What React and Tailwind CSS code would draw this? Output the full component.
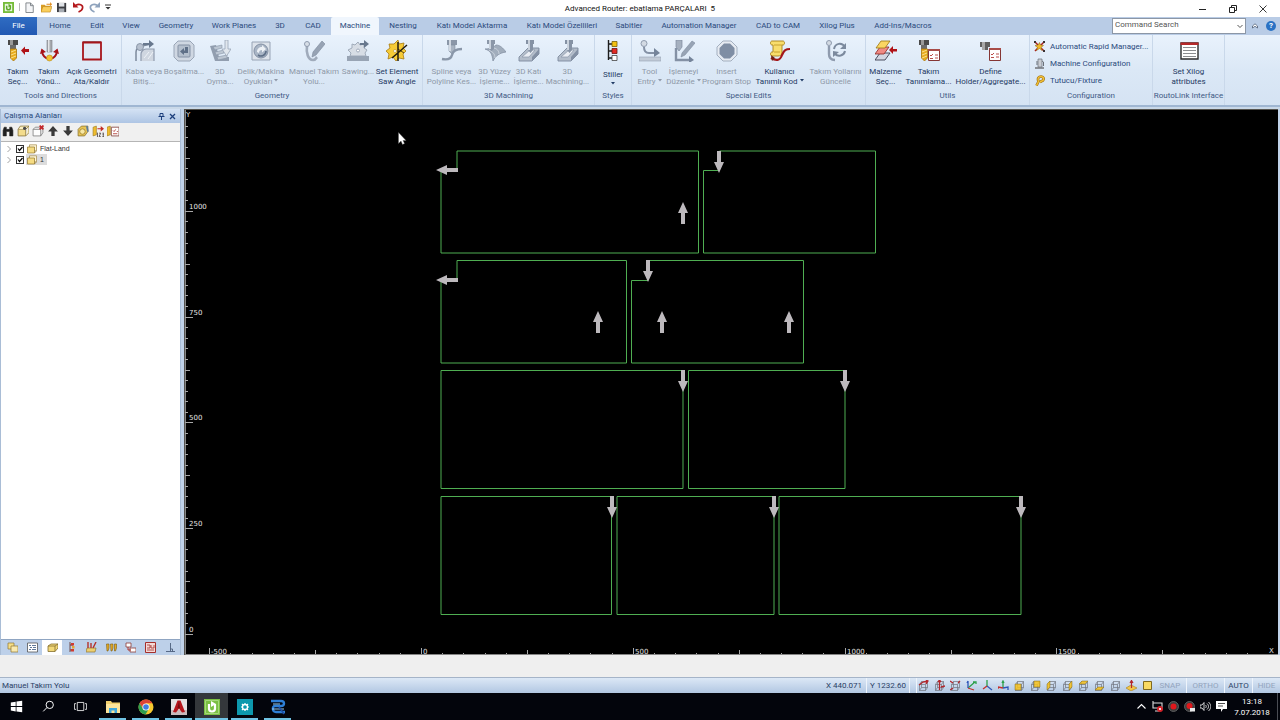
import clsx from "clsx";

const TABS = [
  { label: "Home", w: "w-[42px]" },
  { label: "Edit", w: "w-[32px]" },
  { label: "View", w: "w-[36px]" },
  { label: "Geometry", w: "w-[54px]" },
  { label: "Work Planes", w: "w-[62px]" },
  { label: "3D", w: "w-[30px]" },
  { label: "CAD", w: "w-[36px]" },
  { label: "Machine", w: "w-[48px]", active: true },
  { label: "Nesting", w: "w-[48px]" },
  { label: "Katı Model Aktarma", w: "w-[90px]" },
  { label: "Katı Model Özellileri", w: "w-[90px]" },
  { label: "Sabitler", w: "w-[44px]" },
  { label: "Automation Manager", w: "w-[96px]" },
  { label: "CAD to CAM", w: "w-[62px]" },
  { label: "Xilog Plus", w: "w-[56px]" },
  { label: "Add-Ins/Macros", w: "w-[76px]" },
];

function Icon({ children, box = 22, className = "size-[22px]" }) {
  return (
    <svg viewBox={`0 0 ${box} ${box}`} className={clsx("block shrink-0", className)} fill="none" aria-hidden="true">
      {children}
    </svg>
  );
}

function Drill() {
  return (
    <>
      <path d="M1 0h10v5H1z" fill="#4a4a4a" />
      <path d="M3 0h3v5H3z" fill="#9a9a9a" />
      <path d="M3 5h6v4H3z" fill="#6b6b6b" />
      <path d="M3.500 9h6v9l-3 3-3-3z" fill="#e8ab1c" stroke="#a8750a" strokeWidth=".8" />
      <path d="M4 12l5-2M4 15l5-2M4 18l5-2" stroke="#fbe08a" strokeWidth="1" />
    </>
  );
}

/* ---------- ribbon icons ---------- */

const ICONS = {
  toolSelect: (
    <Icon>
      <Drill />
      <path d="M14 10.500l4-4v2.500h4v3h-4v3z" fill="#b01217" />
    </Icon>
  ),
  toolDir: (
    <Icon>
      <path d="M9 0h5v12H9z" fill="#a5a9ae" stroke="#7e8287" strokeWidth=".6" />
      <path d="M10 0h1.500v12H10z" fill="#e4e6e8" />
      <path d="M4 12c1 4 3 6 6 6.500M19 12c-1 4-3 6-6 6.500" stroke="#a81318" strokeWidth="2" />
      <path d="M2 14l1.500-5.500L8 12zM21 14l-1.500-5.500L15 12z" fill="#a81318" />
      <circle cx="11.500" cy="18" r="3" fill="#f2c231" stroke="#b98a14" strokeWidth=".6" />
    </Icon>
  ),
  openGeo: (
    <Icon>
      <path d="M2 2.500h18v17H2z" fill="#e0eaf6" stroke="#a8161b" strokeWidth="1.800" />
      <path d="M2 1.600h18" stroke="#7f1216" strokeWidth=".6" />
    </Icon>
  ),
  rough: (
    <Icon>
      <path d="M3 21V12c0-3 2-5 6-6l9-2" stroke="#7c899c" strokeWidth="1.500" />
      <path d="M8 21v-7c0-2 2-5 5-5h8v12" fill="#cfd6e0" stroke="#8f9bae" strokeWidth="1.200" />
      <circle cx="7" cy="7" r="3.500" fill="#b7c1cf" stroke="#7c899c" strokeWidth=".8" />
      <path d="M10 3h6V0l5 4-5 4V5h-6z" fill="#68788e" />
      <path d="M11 18l5-6M15 19l5-7" stroke="#eef2f7" />
    </Icon>
  ),
  pocket: (
    <Icon>
      <path d="M5 1h12l4 4v12l-4 4H5l-4-4V5z" fill="#cfd7e2" stroke="#9aa6b7" />
      <rect x="5" y="5" width="12" height="12" rx="1" fill="#b4bfcd" stroke="#8491a5" />
      <path d="M12 7h3v6h-4v2l-4-3.500L11 8v2.500h1z" fill="#5f7088" />
    </Icon>
  ),
  engrave: (
    <Icon>
      <path d="M1 6l6-1 3 12h10v4H6z" fill="#929eaf" />
      <path d="M4 7l9-2v3l-7 2zM6 12l9-2v3l-8 2zM8 17l10-2v3l-9 2z" fill="#bcc6d2" stroke="#8794a6" strokeWidth=".6" />
      <path d="M16 0h3v9h3l-4.500 7L13 9h3z" fill="#e0e6ed" stroke="#9aa6b7" strokeWidth=".8" />
    </Icon>
  ),
  holes: (
    <Icon>
      <path d="M2 2h18v18H2z" fill="#dde3eb" stroke="#98a4b5" />
      <circle cx="11" cy="11" r="7" fill="#a9b5c5" stroke="#8491a5" />
      <path d="M7 12c0-3 2-5 5-5V5l4 4-4 3.500V10c-2 0-3 1-3 3z" fill="#edf1f6" />
      <path d="M16 11a5 5 0 0 1-8 4" stroke="#5e6f87" strokeWidth="1.600" />
    </Icon>
  ),
  manual: (
    <Icon>
      <path d="M4 5c-1 8 1 15 6 15 3 0 3-2 4-3" stroke="#a0abbb" strokeWidth="2.600" />
      <circle cx="4" cy="4" r="2.500" fill="#d7dee7" stroke="#8f9bae" />
      <path d="M19 1l3 3-9 11-4 2 1-5z" fill="#97a3b4" stroke="#7c899c" strokeWidth=".6" />
    </Icon>
  ),
  sawing: (
    <Icon>
      <path d="M5 4l3 1 3-3 2 3 4-1v4l3 2-2 3 1 3H3l1-3-3-3 4-2z" fill="#d7dde5" stroke="#a0abba" />
      <circle cx="11" cy="10.500" r="1.500" fill="#fff" stroke="#8f9bae" strokeWidth=".8" />
      <path d="M0 16h22v5H0z" fill="#98a4b4" />
      <path d="M13 3h4V0l5 4-5 4V5h-4z" fill="#68788e" />
    </Icon>
  ),
  sawAngle: (
    <Icon>
      <path d="M3 4h5l4-4 1 4 5-1-1 5 3 3-3 3 1 5-5-1-3 3-3-4-5 2 1-5-3-3 4-3z" fill="#f6cb36" stroke="#a97b12" strokeWidth=".8" />
      <path d="M12 2v19M21 5L6 18" stroke="#231c0c" strokeWidth="1.500" />
      <path d="M12 9l6 4" stroke="#231c0c" strokeWidth=".8" />
      <circle cx="9" cy="11" r="1.500" fill="#fff" stroke="#a97b12" strokeWidth=".5" />
    </Icon>
  ),
  spline: (
    <Icon>
      <path d="M6 0h10v5H6z" fill="#8b97a8" />
      <path d="M8 5h6v6l-3 3-3-3z" fill="#a9b4c2" stroke="#7c899c" strokeWidth=".6" />
      <path d="M8 0h2v11H8z" fill="#d2d9e2" />
      <path d="M1 19c5 1 9 0 10-4 1-5 5-6 10-6" stroke="#8a97a9" strokeWidth="2.400" />
    </Icon>
  ),
  surface: (
    <Icon>
      <path d="M1 9c6 2 7 5 8 12 3-6 7-8 13-9C19 8 16 5 12 5 9 8 5 9 1 9z" fill="#a1adbc" stroke="#7e8b9e" strokeWidth=".7" />
      <path d="M5 10c4 2 6 4 6 8M10 8c4 1 5 4 5 6" stroke="#ced6e0" />
      <path d="M3 0h8v4H3zM5 4h5v5l-2.500 2L5 9z" fill="#8b97a8" />
      <path d="M5 0h2v9H5z" fill="#ccd4de" />
    </Icon>
  ),
  solid: (
    <Icon>
      <path d="M1 17L10 8h11v6l-7 7H1z" fill="#b3bdca" stroke="#7e8b9e" strokeWidth=".9" />
      <path d="M4 17l8-7h5l-6 7z" fill="#e9edf3" stroke="#8a97a9" strokeWidth=".7" />
      <path d="M14 21v-4l7-8v5z" fill="#8491a5" />
      <path d="M8 0h8v4H8zM10 4h5v6l-2.500 3L10 10z" fill="#8592a4" />
      <path d="M10 0h2v10h-2z" fill="#ccd4de" />
    </Icon>
  ),
  styles: (
    <Icon>
      <path d="M6.500 0v20M6 4h5M6 11h5M6 18h5" stroke="#1d1d1d" strokeWidth="1.400" />
      <path d="M10 1.500h5v5h-5z" fill="#f3c113" stroke="#7a6009" strokeWidth=".8" />
      <path d="M10 8.500h5v5h-5z" fill="#e32a24" stroke="#6f1310" strokeWidth=".8" />
      <path d="M10 15.500h5v5h-5z" fill="#fff" stroke="#444" strokeWidth=".8" />
    </Icon>
  ),
  toolEntry: (
    <Icon>
      <circle cx="5" cy="3.500" r="3" fill="#d3dae3" stroke="#8f9bae" />
      <path d="M5 7c0 4 1 6 5 6h6" stroke="#8491a5" strokeWidth="2" />
      <path d="M15 8l6 5-6 4z" fill="#75849a" />
      <path d="M0 17h22v4H0z" fill="#c2cbd7" stroke="#96a2b3" strokeWidth=".6" />
    </Icon>
  ),
  editOp: (
    <Icon>
      <path d="M3 0h6v7l-3 4-3-4z" fill="#a5b0bf" stroke="#7e8b9e" strokeWidth=".7" />
      <path d="M3 8v12h14" stroke="#8491a5" strokeWidth="2.400" />
      <path d="M16 16l5 4-5 3z" fill="#75849a" />
      <path d="M19 1l3 2-10 12-4 2 1-4z" fill="#98a4b5" stroke="#7e8b9e" strokeWidth=".6" />
    </Icon>
  ),
  stop: (
    <Icon>
      <path d="M7 1h8l6 6v8l-6 6H7l-6-6V7z" fill="#e6ebf2" stroke="#a3afbf" />
      <path d="M8 3.500h6L18.500 8v6L14 18.500H8L3.500 14V8z" fill="#7f8ea4" />
    </Icon>
  ),
  userCode: (
    <Icon>
      <path d="M3 1h11c2 0 2 4 0 4h-1v8c0 2-2 3-4 3H3c-2 0-2-4 0-4h1V5H3C1 5 1 1 3 1z" fill="#f8dd6c" stroke="#a8821a" strokeWidth=".9" />
      <path d="M5 5h8M5 12h6" stroke="#c8a02c" />
      <path d="M2 18c5 3 9 3 11-3 2-5 4-6 8-6" stroke="#a3171a" strokeWidth="2.200" />
      <path d="M2 15l1 6 3-3z" fill="#6d2016" />
    </Icon>
  ),
  update: (
    <Icon>
      <circle cx="4" cy="3" r="2.500" fill="#d3dae3" stroke="#8f9bae" />
      <path d="M4 6v8c0 3 1 6 6 6" stroke="#8f9bae" strokeWidth="2.400" />
      <path d="M9 9c1-6 8-7 11-2M20 11c-1 5-7 6-10 3" stroke="#7c8a9e" strokeWidth="2" />
      <path d="M21 3v6h-6zM8 17v-6l6 1z" fill="#7c8a9e" />
    </Icon>
  ),
  material: (
    <Icon>
      <path d="M0 20l5-7h10l-5 7z" fill="#d3d6e2" stroke="#3d4050" strokeWidth=".9" />
      <path d="M0 14l5-7h9l-5 7z" fill="#f08a84" stroke="#8c2722" strokeWidth=".8" />
      <path d="M1 8l5-7h9l-5 7z" fill="#fad662" stroke="#9b7611" strokeWidth=".8" />
      <path d="M14 10l4-4v3h4v2.500h-4V14z" fill="#b01217" />
    </Icon>
  ),
  defineTool: (
    <Icon>
      <Drill />
      <path d="M10.500 9.500h11v11h-11z" fill="#fff" stroke="#853634" />
      <path d="M10 9h12v2H10z" fill="#a84c48" />
      <path d="M12 15l1 1 2-2M12 18.500h3M17 15h3M17 18h3" stroke="#b23a36" strokeWidth=".9" />
    </Icon>
  ),
  holder: (
    <Icon>
      <path d="M0 2h10v5H0zM2 7h6v3H2z" fill="#606060" />
      <path d="M2 2h3v8H2z" fill="#a8a8a8" />
      <path d="M9.500 8.500h11v12h-11z" fill="#fff" stroke="#853634" />
      <path d="M9 8h12v2H9z" fill="#a84c48" />
      <path d="M11 14l1 1 2-2M11 17.500h3M16 14h3M16 17h3" stroke="#b23a36" strokeWidth=".9" />
    </Icon>
  ),
  xilog: (
    <Icon>
      <path d="M3 3h17v16H3z" fill="#fff" stroke="#2b2b2b" strokeWidth="1.400" />
      <path d="M2.500 2.500h18v2.500h-18z" fill="#b5282a" />
      <path d="M5 7.500h13M5 10.500h13M5 13.500h13M5 16.500h13" stroke="#8b8d90" />
    </Icon>
  ),
};

const GROUPS = [
  {
    title: "Tools and Directions",
    w: "w-[122px]",
    items: [
      { icon: "toolSelect", lines: ["Takım", "Seç..."], w: "w-[32px]" },
      { icon: "toolDir", lines: ["Takım", "Yönü..."], w: "w-[30px]" },
      { icon: "openGeo", lines: ["Açık Geometri", "Ata/Kaldır"], w: "w-[56px]" },
    ],
  },
  {
    title: "Geometry",
    w: "w-[301px]",
    items: [
      { icon: "rough", lines: ["Kaba veya", "Bitiş..."], w: "w-[40px]", off: true },
      { icon: "pocket", lines: ["Boşaltma..."], w: "w-[40px]", off: true },
      { icon: "engrave", lines: ["3D", "Oyma..."], w: "w-[32px]", off: true },
      { icon: "holes", lines: ["Delik/Makina", "Oyukları"], w: "w-[50px]", off: true, menu: true },
      { icon: "manual", lines: ["Manuel Takım", "Yolu..."], w: "w-[56px]", off: true },
      { icon: "sawing", lines: ["Sawing..."], w: "w-[32px]", off: true },
      { icon: "sawAngle", lines: ["Set Element", "Saw Angle"], w: "w-[46px]" },
    ],
  },
  {
    title: "3D Machining",
    w: "w-[172px]",
    items: [
      { icon: "spline", lines: ["Spline veya", "Polyline Kes..."], w: "w-[50px]", off: true },
      { icon: "surface", lines: ["3D Yüzey", "İşleme..."], w: "w-[36px]", off: true },
      { icon: "solid", lines: ["3D Katı", "İşleme..."], w: "w-[32px]", off: true },
      { icon: "solid", lines: ["3D", "Machining..."], w: "w-[46px]", off: true },
    ],
  },
  {
    title: "Styles",
    w: "w-[37px]",
    items: [{ icon: "styles", lines: ["Stiller"], w: "w-[36px]", stacked: true }],
  },
  {
    title: "Special Edits",
    w: "w-[234px]",
    items: [
      { icon: "toolEntry", lines: ["Tool", "Entry"], w: "w-[32px]", off: true, menu: true },
      { icon: "editOp", lines: ["İşlemeyi", "Düzenle"], w: "w-[36px]", off: true, menu: true },
      { icon: "stop", lines: ["Insert", "Program Stop"], w: "w-[50px]", off: true },
      { icon: "userCode", lines: ["Kullanıcı", "Tanımlı Kod"], w: "w-[56px]", menu: true },
      { icon: "update", lines: ["Takım Yollarını", "Güncelle"], w: "w-[56px]", off: true },
    ],
  },
  {
    title: "Utils",
    w: "w-[164px]",
    items: [
      { icon: "material", lines: ["Malzeme", "Seç..."], w: "w-[36px]" },
      { icon: "defineTool", lines: ["Takım", "Tanımlama..."], w: "w-[50px]" },
      { icon: "holder", lines: ["Define", "Holder/Aggregate..."], w: "w-[74px]" },
    ],
  },
];

function Caret({ className }) {
  return (
    <svg viewBox="0 0 4 3" className={clsx("inline-block h-[3px] w-[4px]", className)} aria-hidden="true">
      <path d="M0 0h4L2 2.500z" fill="currentColor" />
    </svg>
  );
}

function RibbonButton({ icon, lines, w, off, menu, stacked }) {
  return (
    <button
      type="button"
      disabled={off}
      className={clsx(
        "flex shrink-0 flex-col items-center whitespace-nowrap text-center leading-[10px]",
        w,
        off ? "text-[#8f99a8]" : "text-[#1f3a63]"
      )}
    >
      {ICONS[icon]}
      <span className={clsx("flex flex-col items-center", stacked ? "mt-2" : "mt-[5px]")}>
        {lines.map((line, i) => (
          <span key={i}>
            {line}
            {menu && i === lines.length - 1 && <Caret className="mb-[2px] ml-[2px]" />}
          </span>
        ))}
        {stacked && <Caret className="mt-[2px]" />}
      </span>
    </button>
  );
}

function Group({ title, w, children }) {
  return (
    <section className={clsx("flex shrink-0 flex-col border-r border-[#c9d8ea] pt-[5px]", w)} aria-label={title}>
      <div className="flex flex-1 justify-center">{children}</div>
      <div className="whitespace-nowrap pb-1 text-center leading-[10px] text-[#3f5a85]">{title}</div>
    </section>
  );
}

/* ---------- title bar, tabs and ribbon ---------- */

function RouterLogo({ className }) {
  return (
    <Icon box={12} className={className}>
      <path d="M0 0h12v12H0z" fill="#76bd3a" />
      <path d="M2 2h8v8H2z" fill="#e9f5df" />
      <path d="M4 4v2.500a2 2 0 0 0 4 0V4" stroke="#5fa82a" strokeWidth="1.600" />
      <path d="M6 2l3 2-3 2z" fill="#5fa82a" />
    </Icon>
  );
}

function QuickAccess() {
  const cls = "size-[11px]";
  return (
    <div className="flex items-center gap-[5px] pl-[3px] pb-[3px]">
      <RouterLogo className={cls} />
      <span className="h-2 w-px bg-[#b9b9b9]" />
      <button type="button" aria-label="New">
        <Icon box={12} className={cls}>
          <path d="M1 1h5l3 3v7.500H1z" fill="#f4f5f7" stroke="#6f747b" strokeWidth=".9" />
          <path d="M6 1v3h3" stroke="#6f747b" strokeWidth=".9" />
        </Icon>
      </button>
      <button type="button" aria-label="Open">
        <Icon box={12} className={cls}>
          <path d="M0 11V3h4l1 1h5v7z" fill="#d89d25" />
          <path d="M0 11l2-6h10l-2 6z" fill="#f9ce5c" stroke="#b97f14" strokeWidth=".6" />
          <path d="M6 2h4V0l2 2.500L10 5V3H6z" fill="#e08a1c" />
        </Icon>
      </button>
      <button type="button" aria-label="Save">
        <Icon box={12} className={cls}>
          <path d="M0 1h10v10H0z" fill="#3b3d42" />
          <path d="M2 1h6v4H2z" fill="#dfe2e6" />
          <path d="M2 7h6v4H2z" fill="#a8adb4" />
        </Icon>
      </button>
      <button type="button" aria-label="Undo">
        <Icon box={12} className={cls}>
          <path d="M3 3.500c4-2 8-.5 7.500 3-.3 2-2 3.500-4.500 4.500" stroke="#b3181c" strokeWidth="1.800" />
          <path d="M0 0v6h6z" fill="#b3181c" />
        </Icon>
      </button>
      <button type="button" aria-label="Redo">
        <Icon box={12} className={cls}>
          <path d="M9 3.500c-4-2-8-.5-7.500 3 .3 2 2 3.500 4.500 4.500" stroke="#8fa3bd" strokeWidth="1.800" />
          <path d="M12 0v6H6z" fill="#8fa3bd" />
        </Icon>
      </button>
      <button type="button" aria-label="Customize toolbar">
        <Icon box={6} className="size-[6px]">
          <path d="M0 1h6" stroke="#333" />
          <path d="M.5 3h5L3 5.500z" fill="#333" />
        </Icon>
      </button>
    </div>
  );
}

function TitleBar() {
  return (
    <header className="grid h-[17px] shrink-0 grid-cols-3 items-center bg-white">
      <QuickAccess />
      <h1 className="whitespace-pre text-center text-[#111]">Advanced Router: ebatlama PARÇALARI  5</h1>
      <div className="flex justify-end gap-[22px] pr-[13px] text-[#222]">
        <button type="button" aria-label="Minimize">
          <Icon box={8} className="size-2"><path d="M0 4.500h7" stroke="currentColor" /></Icon>
        </button>
        <button type="button" aria-label="Restore">
          <Icon box={8} className="size-2">
            <path d="M.5 2.500h5v5h-5zM2.500 2.500v-2h5v5h-2" stroke="currentColor" />
          </Icon>
        </button>
        <button type="button" aria-label="Close">
          <Icon box={8} className="size-2"><path d="M.5.5l7 7M7.500.5l-7 7" stroke="currentColor" strokeWidth=".9" /></Icon>
        </button>
      </div>
    </header>
  );
}

function TabBar() {
  return (
    <nav className="flex h-[18px] shrink-0 bg-[#b9cce6] text-[#2b4a7c]">
      <button type="button" className="mr-[2px] w-[37px] bg-linear-to-b from-[#2f6cc2] to-[#2259b3] text-white">File</button>
      {TABS.map((t) => (
        <button
          key={t.label}
          type="button"
          className={clsx(
            "shrink-0 whitespace-nowrap",
            t.w,
            t.active && "rounded-t-[2px] bg-[#f0f6fd]"
          )}
        >
          {t.label}
        </button>
      ))}
      <div className="ml-auto flex items-center gap-[6px] pr-[4px]">
        <div className="relative">
          <input
            type="text"
            aria-label="Command Search"
            placeholder="Command Search"
            className="block h-[16px] w-[134px] border border-[#8c97a6] bg-white pl-[2px] pb-[4px] text-[#444] outline-none placeholder:text-[#555]"
          />
          <Icon box={6} className="absolute right-[3px] top-[5px] size-[6px]">
            <path d="M.5 2L3 4.500 5.500 2" stroke="#444" strokeWidth=".9" />
          </Icon>
        </div>
        <button type="button" aria-label="Collapse ribbon">
          <Icon box={6} className="size-[6px]">
            <path d="M.5 3L3 .8 5.500 3v2L3 3.300.5 5z" fill="#fff" stroke="#3d4d66" strokeWidth=".7" />
          </Icon>
        </button>
        <button type="button" aria-label="Help" className="ml-[2px] flex size-[10px] items-center justify-center rounded-full bg-[#2a72c4] font-bold leading-none text-white">
          ?
        </button>
      </div>
    </nav>
  );
}

function Ribbon() {
  const row = "flex items-center gap-[5px] leading-[10px] whitespace-nowrap";
  return (
    <div className="flex h-[70px] shrink-0 overflow-hidden bg-linear-to-b from-[#e9f2fc] via-[#dbe8f6] to-[#d5e3f3]">
      {GROUPS.map((g) => (
        <Group key={g.title} title={g.title} w={g.w}>
          {g.items.map((it, i) => <RibbonButton key={i} {...it} />)}
        </Group>
      ))}
      <Group title="Configuration" w="w-[123px]">
        <div className="flex flex-1 flex-col gap-[6px] pl-[4px] pt-[1px] text-[#2b4a7c]">
          <button type="button" className={row}>
            <Icon box={11} className="size-[11px]">
              <path d="M1 1l4 4M10 1L6 5M1 10l4-4M10 10L7 7" stroke="#a82020" strokeWidth="1.500" />
              <path d="M5.500 1.500l1 2.500 3 .5-2.500 2 1 3-2.500-2-3 2 1-3-2.500-2 3-.5z" fill="#f0b928" stroke="#8a6510" strokeWidth=".5" />
              <path d="M0 0h2v2H0zM9 0h2v2H9zM9 9h2v2H9z" fill="#3a3030" />
            </Icon>
            Automatic Rapid Manager...
          </button>
          <button type="button" className={row}>
            <Icon box={11} className="size-[11px]">
              <path d="M1 9h9v2H1z" fill="#8b9097" />
              <path d="M4 1h4v8H4z" fill="#c9cdd3" stroke="#6b7078" strokeWidth=".7" />
              <path d="M3 3v4M8 3l1.500 1v4" stroke="#6b7078" />
            </Icon>
            Machine Configuration
          </button>
          <button type="button" className={row}>
            <Icon box={11} className="size-[11px]">
              <path d="M2.500 10.500l2-4C3 3 5 1.500 7 1.500s3.500 2 2 4L6 7" stroke="#9b6f10" strokeWidth="2.600" />
              <path d="M2.500 10.500l2-4C3 3 5 1.500 7 1.500s3.500 2 2 4L6 7" stroke="#f2bf35" strokeWidth="1.500" />
            </Icon>
            Tutucu/Fixture
          </button>
        </div>
      </Group>
      <Group title="RoutoLink Interface" w="w-[72px]">
        <RibbonButton icon="xilog" lines={["Set Xilog", "attributes"]} w="w-[46px]" />
      </Group>
    </div>
  );
}

/* ---------- work area panel ---------- */

function Folder({ className = "size-[10px]" }) {
  return (
    <Icon box={10} className={className}>
      <path d="M2.500.8h7v6h-7z" fill="#fff7d5" stroke="#a3894a" strokeWidth=".7" />
      <path d="M.5 3h7v6h-7z" fill="#f6dc83" stroke="#94752a" strokeWidth=".7" />
      <path d="M7.500 9l2-2.200" stroke="#94752a" strokeWidth=".7" />
    </Icon>
  );
}

const PANEL_TOOLS = [
  {
    name: "Find",
    art: <path d="M1 10V5l1-3h2v2h3V2h2l1 3v5H7V6H4v4z" fill="#202020" stroke="#202020" strokeWidth=".5" />,
  },
  {
    name: "New work area",
    art: (
      <>
        <path d="M1 4h7v6H1z" fill="#f3dc8c" stroke="#857034" strokeWidth=".7" />
        <path d="M1 4l2-3h8L8 4M8 10l3-3V1" fill="#faf0c4" stroke="#857034" strokeWidth=".7" />
        <circle cx="7" cy="3" r="1.500" fill="#474747" />
      </>
    ),
  },
  {
    name: "Delete work area",
    art: (
      <>
        <path d="M1 4h7v6H1z" fill="#fdfdfd" stroke="#777" strokeWidth=".7" />
        <path d="M1 4l2-2h7v5l-2 3" stroke="#777" strokeWidth=".7" />
        <path d="M7 .5l3.500 3.500M10.500.5L7 4" stroke="#c3272b" strokeWidth="1.600" />
      </>
    ),
  },
  { name: "Up", art: <path d="M5.500 1l4.500 5H7v4H4V6H1z" fill="#3a3a3a" /> },
  { name: "Down", art: <path d="M5.500 10L1 5h3V1h3v4h3z" fill="#3a3a3a" /> },
  {
    name: "Edit work area",
    art: (
      <>
        <path d="M1 4l3-3h6v5l-3 4H1z" fill="#e8c557" stroke="#85702f" strokeWidth=".7" />
        <circle cx="5" cy="6" r="2.500" fill="#f7e7a4" stroke="#9c7c20" strokeWidth=".7" />
        <path d="M9 1l1 5" stroke="#58799f" strokeWidth="1.500" />
      </>
    ),
  },
  {
    name: "Renumber",
    art: (
      <>
        <path d="M1 2l3-1v8l-3 1z" fill="#f0bd2f" stroke="#9c7c20" strokeWidth=".6" />
        <path d="M5 3h3V1l3 2.500L8 6V4H5z" fill="#c32b22" />
        <path d="M5 7v4M6.500 7.500H8L6.500 10.500H8M9.500 7.500H11v3H9.500M9.500 9H11" stroke="#3a3030" strokeWidth=".7" />
      </>
    ),
  },
  {
    name: "Properties",
    art: (
      <>
        <path d="M0 2l3-1v8l-3 1z" fill="#f0bd2f" stroke="#9c7c20" strokeWidth=".6" />
        <path d="M4 2h7v8H4z" fill="#fff" stroke="#8a4b45" strokeWidth=".8" />
        <path d="M5.500 5l1 1 1.500-2M5.500 8h4M9 6h1" stroke="#b23a36" strokeWidth=".8" />
      </>
    ),
  },
];

const PANEL_TABS = [
  { name: "Layers", art: <><path d="M1 1h6v6H1z" fill="#f6df87" stroke="#8f7532" strokeWidth=".7" /><path d="M4 4h7v6H4z" fill="#f9eab0" stroke="#8f7532" strokeWidth=".7" /></> },
  { name: "List", art: <><path d="M.5 1h10v9H.5z" fill="#fff" stroke="#555" strokeWidth=".8" /><path d="M2 3.500h2M5 3.500h4M3 5.500h2M6 5.500h3M2 7.500h2M5 7.500h4" stroke="#39577f" strokeWidth=".8" /></> },
  { name: "Work areas", active: true, art: <><path d="M1 4l3-2h7v4L8 9.500H1z" fill="#f2d878" stroke="#85702f" strokeWidth=".8" /><path d="M1 4h7v5.500M8 4l3-2" stroke="#85702f" strokeWidth=".8" /></> },
  { name: "Styles", art: <><path d="M4 0v10M4 3h3M4 8h3" stroke="#5c2c22" strokeWidth=".8" /><path d="M5 1h3v2.500H5zM5 7h3v2.500H5z" fill="#d03a30" /><path d="M6 4h2.500v2.500H6z" fill="#e5a934" /></> },
  { name: "Operations", art: <><path d="M1 6h9l-1 4H0z" fill="#edcf70" stroke="#8f7532" strokeWidth=".7" /><path d="M2 0v6M5 1v5M10 0L7 6" stroke="#b5322b" strokeWidth="1.400" /></> },
  { name: "Tools", art: <><path d="M.5 2h2.500v4l-1 3h-1zM4.500 2H7v4L6 9H5zM8.500 2h2v4l-1 3h-1z" fill="#e6ac25" stroke="#7a5b10" strokeWidth=".6" /></> },
  { name: "Blocks", art: <><path d="M1 1h5v4H1zM5 6h6v4H5z" fill="#fff" stroke="#8a3a36" strokeWidth=".8" /><path d="M3 5v3h3" stroke="#b5322b" /></> },
  { name: "Ops", art: <><path d="M.5.5h10v10H.5z" fill="#f4d9d6" stroke="#a52f2b" /><path d="M2 3h3v3H2M6 3v3h3V3M2 8h7" stroke="#a52f2b" strokeWidth=".8" /></> },
  { name: "Axis", art: <path d="M5.500 1v8M1 9.500h9M5.500 7h2v2.500" stroke="#4c5f7c" strokeWidth=".9" /> },
];

function TreeRow({ id, label, selected }) {
  return (
    <li className="flex h-[11px] items-center pl-[5px]">
      <button type="button" aria-label={`Expand ${label}`} className="w-[10px]">
        <Icon box={6} className="size-[6px]"><path d="M1.500 0L4.500 3l-3 3" stroke="#8a8a8a" strokeWidth=".8" /></Icon>
      </button>
      <span className="relative size-[8px]">
        <input
          id={id}
          type="checkbox"
          defaultChecked
          className="block size-[8px] appearance-none border border-[#333] bg-white"
        />
        <Icon box={8} className="pointer-events-none absolute left-0 top-0 size-2">
          <path d="M2 3.500l1.500 2L6.500 2" stroke="#000" strokeWidth="1.200" />
        </Icon>
      </span>
      <label htmlFor={id} className={clsx("ml-[2px] flex h-[11px] items-center gap-[3px] px-px", selected && "bg-[#dcdcdc]")}>
        <Folder />
        <span className="pr-[2px]">{label}</span>
      </label>
    </li>
  );
}

function WorkAreaPanel() {
  return (
    <aside className="flex w-[181px] shrink-0 flex-col border-x border-[#a9bdd6] bg-[#f0f0f0]">
      <div className="flex h-[14px] shrink-0 items-center bg-linear-to-b from-[#d4e2f4] to-[#aec5e4] pl-[3px] pr-[4px] text-[#28487c]">
        <h2>Çalışma Alanları</h2>
        <button type="button" aria-label="Pin" className="ml-auto">
          <Icon box={7} className="size-[7px]"><path d="M2 .5h3v3H2zM.5 3.500h6M3.500 3.500V7" stroke="#1d3f7c" /></Icon>
        </button>
        <button type="button" aria-label="Close panel" className="ml-[4px]">
          <Icon box={7} className="size-[7px]"><path d="M1 1l5 5M6 1L1 6" stroke="#1d3f7c" strokeWidth="1.300" /></Icon>
        </button>
      </div>
      <div className="flex h-[19px] shrink-0 items-center gap-[3px] border-b border-[#b5b5b5] pb-[3px] pl-px">
        {PANEL_TOOLS.map((t) => (
          <button key={t.name} type="button" aria-label={t.name}>
            <Icon box={11} className="size-[12px]">{t.art}</Icon>
          </button>
        ))}
      </div>
      <ul className="min-h-0 flex-1 bg-white pt-px font-['Liberation_Sans',Arial,sans-serif] text-[7px] text-[#333]">
        <TreeRow id="flat-land" label="Flat-Land" />
        <TreeRow id="area-1" label="1" selected />
      </ul>
      <div className="flex h-[16px] shrink-0 border-t border-[#8fa5c2] bg-[#bdd0e9] pl-[2px]">
        {PANEL_TABS.map((t) => (
          <button
            key={t.name}
            type="button"
            aria-label={t.name}
            className={clsx("flex h-[15px] w-[20px] items-center justify-center", t.active && "bg-white")}
          >
            <Icon box={11} className="size-[11px]">{t.art}</Icon>
          </button>
        ))}
      </div>
    </aside>
  );
}

/* ---------- drawing area ---------- */

const PARTS = [
  "M441 170.500H457V151H698.500V253H441Z",
  "M703.500 170.500H719.500V151H875.500V253H703.500Z",
  "M441 280.500H457V260.500H626.500V363H441Z",
  "M631.500 280.500H648V260.500H803.500V363H631.500Z",
  "M441 370.500H683V488.500H441Z",
  "M688.500 370.500H845V488.500H688.500Z",
  "M441 496.500H611.500V614.500H441Z",
  "M617 496.500H774V614.500H617Z",
  "M779 496.500H1021V614.500H779Z",
];

// x, y is the tail of the arrow, rot turns it away from pointing down
const ARROWS = [
  [719, 151, 0], [648, 260, 0], [683, 370, 0], [845, 370, 0],
  [612, 496, 0], [774, 496, 0], [1021, 496, 0],
  [683, 224, 180], [598, 333, 180], [662, 333, 180], [789, 333, 180],
  [458, 170, 90], [458, 280, 90],
];

const X0 = 421;
const Y0 = 634;
const STEP_X = 21.18;
const STEP_Y = 10.58;

function range(from, to) {
  return Array.from({ length: to - from + 1 }, (_, i) => from + i);
}

function Drawing() {
  return (
    <main className="min-w-0 flex-1 overflow-hidden border-l border-t border-[#55534e] bg-black">
      <svg
        viewBox="185 110 1093 545"
        preserveAspectRatio="xMinYMin meet"
        className="block size-full"
        fontFamily="'DejaVu Sans', sans-serif"
        fontSize="7"
        fill="#e2e2e2"
        role="img"
        aria-label="Nested parts"
      >
        <g stroke="#a9a9a9">
          <path d="M185.500 110V655M185 654.500H1278" stroke="#858585" />
          {range(0, 48).map((i) => {
            const y = Math.round(Y0 - i * STEP_Y) + 0.5;
            const len = i % 10 === 0 ? 8 : i % 5 === 0 ? 5 : 3;
            return <path key={i} d={`M185 ${y}h${len}`} />;
          })}
          {range(-10, 39).map((i) => {
            const x = Math.round(X0 + i * STEP_X) + 0.5;
            const len = i % 10 === 0 ? 6 : i % 5 === 0 ? 4 : 1;
            return <path key={i} d={`M${x} 654v${-len}`} />;
          })}
        </g>
        {[0, 250, 500, 750, 1000].map((v) => (
          <text key={v} x="189" y={Math.round(Y0 - (v / 25) * STEP_Y) - 2}>{v}</text>
        ))}
        {[-500, 0, 500, 1000, 1500].map((v) => (
          <text key={v} x={Math.round(X0 + (v / 50) * STEP_X) + 2} y="654">{v}</text>
        ))}
        <text x="186" y="117">Y</text>
        <text x="1269" y="653">X</text>

        <g fill="none" stroke="#4fae52">
          {PARTS.map((d) => <path key={d} d={d} />)}
        </g>
        {ARROWS.map(([x, y, rot]) => (
          <path
            key={`${x}-${y}`}
            d="M-2 0H2V11H5L0 22L-5 11H-2Z"
            transform={`translate(${x} ${y}) rotate(${rot})`}
            fill="#bdb9bd"
          />
        ))}
        <path d="M398.500 132.500v11l2.500-2.500 1.500 3.500 2-1-1.500-3h3z" fill="#fff" stroke="#555" strokeWidth=".4" />
      </svg>
    </main>
  );
}

/* ---------- status bar ---------- */

const FACES = {
  front: "M1 4h6v6H1z",
  back: "M4 1h6v6H4z",
  left: "M1 4l3-3v6l-3 3z",
  right: "M7 4l3-3v6l-3 3z",
  top: "M1 4l3-3h6L7 4z",
  bottom: "M1 10l3-3h6l-3 3z",
};

function Cube({ face, red }) {
  return (
    <>
      <path d="M1.500 4.500h6v6h-6zM3.500 1.500h6v6h-6zM1.500 4.500l2-3M7.500 4.500l2-3M1.500 10.500l2-3M7.500 10.500l2-3" stroke="#70747e" strokeWidth=".7" />
      {face && <path d={FACES[face]} fill="#f7c21c" fillOpacity=".85" stroke="#8a7020" strokeWidth=".5" />}
      {red && <path d={red} stroke="#b3262b" strokeWidth="1.300" />}
    </>
  );
}

function Axes({ d }) {
  return (
    <>
      <path d={d[0]} stroke="#2ca04a" strokeWidth="1.300" />
      <path d={d[1]} stroke="#2d56b8" strokeWidth="1.300" />
      <path d={d[2]} stroke="#c5302c" strokeWidth="1.300" />
    </>
  );
}

const VIEWS = [
  { name: "Isometric", art: <Cube red="M1 5l4-3 5-1M8 0l2 1-2 3" /> },
  { name: "Rotate", art: <Cube red="M5.500 1v9M7 7l4-1M4 2l1.500-2L7 2" /> },
  { name: "Zoom", art: <Cube red="M0 1l3 2M10 1L8 3M0 10l3-2" /> },
  { name: "XY axes", art: <Axes d={["M2 8L9 2M7 2h3v2", "M2 8V1M1 3l1-2", "M2 8l6 2"]} /> },
  { name: "XYZ axes", art: <Axes d={["M5 6V0", "M5 6l5 4", "M5 6L1 9"]} /> },
  { name: "Z axis", art: <Axes d={["M5 8V1M4 3l1-2 1 2", "M5 8l5-1v3", "M5 8L0 7v2"]} /> },
  { name: "Front", art: <Cube face="front" /> },
  { name: "Back", art: <Cube face="back" /> },
  { name: "Left", art: <Cube face="left" /> },
  { name: "Right", art: <Cube face="right" /> },
  { name: "Top", art: <Cube face="top" /> },
  { name: "Bottom", art: <Cube face="bottom" /> },
  { name: "Wire", art: <Cube /> },
  { name: "Work plane", art: <><path d="M0 8l5-3 6 3-6 3z" fill="#f2c54a" stroke="#a8821a" strokeWidth=".6" /><path d="M5.500 8V1M4 3l1.500-2.500L7 3" stroke="#b3262b" strokeWidth="1.200" /></> },
  { name: "Flat", art: <path d="M1.500 1.500h8v8h-8z" fill="#f8d962" stroke="#80691e" /> },
];

function StatusBar() {
  const cell = "flex h-full items-center border-l border-[#eef4fb]";
  return (
    <footer className="flex h-[16px] shrink-0 items-center whitespace-nowrap border-t border-[#a5b4c8] bg-linear-to-b from-[#dce8f6] to-[#b2c7e2] text-[#2b4166]">
      <span className="pl-[2px]">Manuel Takım Yolu</span>
      <span className="ml-auto pr-[4px]">X 440.071</span>
      <span className={clsx(cell, "w-[43px] justify-center")}>Y 1232.60</span>
      <span className={clsx(cell, "w-[7px]")} />
      <div className={clsx(cell, "gap-[5px] px-px")}>
        {VIEWS.map((v) => (
          <button key={v.name} type="button" aria-label={v.name}>
            <Icon box={11} className="size-[11px]">{v.art}</Icon>
          </button>
        ))}
      </div>
      <button type="button" className="flex h-full w-[32px] items-center justify-center text-[#93a4bd]">SNAP</button>
      <button type="button" className={clsx(cell, "w-[38px] justify-center text-[#93a4bd]")}>ORTHO</button>
      <button type="button" className={clsx(cell, "w-[28px] justify-center")}>AUTO</button>
      <button type="button" className={clsx(cell, "w-[28px] justify-center text-[#93a4bd]")}>HIDE</button>
    </footer>
  );
}

/* ---------- windows taskbar ---------- */

const APPS = [
  { name: "Start", art: <path d="M1 3l6-1v5.500H1zM8 1.800L15 1v6.500H8zM1 8.500h6V14l-6-1zM8 8.500h7V15l-7-.8z" fill="#fff" /> },
  { name: "Search", art: <path d="M14 6a4.500 4.500 0 1 1-9 0 4.500 4.500 0 0 1 9 0zM6.200 9.200L1.500 14" stroke="#fff" strokeWidth="1.200" /> },
  { name: "Task view", art: <path d="M4 3h8v10H4zM2.500 4.500h-2v7h2M13.500 4.500h2v7h-2" stroke="#fff" /> },
  {
    name: "File Explorer",
    open: true,
    art: (
      <>
        <path d="M1 2h5l1 1.500h8V14H1z" fill="#f0cf6c" />
        <path d="M1 5h14v9H1z" fill="#fbe49b" />
        <path d="M4 14V9h8v5h-2.500v-2.500h-3V14z" fill="#3fa7dc" />
      </>
    ),
  },
  {
    name: "Chrome",
    open: true,
    art: (
      <>
        <circle cx="8" cy="8" r="7.500" fill="#f7c92f" />
        <path d="M1.500 4.200A7.500 7.500 0 0 1 14.500 4.300H8L5 9.500z" fill="#dd4436" />
        <path d="M1.500 4.200A7.500 7.500 0 0 0 7.500 15.500L11 9.500 5 9.800z" fill="#2f9e4f" />
        <circle cx="8" cy="8" r="3.600" fill="#fff" />
        <circle cx="8" cy="8" r="2.800" fill="#3f7de0" />
      </>
    ),
  },
  {
    name: "AutoCAD",
    open: true,
    art: (
      <>
        <path d="M0 0h16v16H0z" fill="#e3e0e1" />
        <path d="M0 11h16v5H0z" fill="#c9babb" />
        <path d="M6.500 1.500h3L14 13l-3 .5L8 9.500l-3 4-3-.5z" fill="#b5161c" />
        <path d="M8 2l1 7-1 .5L6.500 9z" fill="#7a0c10" />
      </>
    ),
  },
  {
    name: "Advanced Router",
    open: true,
    active: true,
    art: (
      <>
        <path d="M0 0h16v16H0z" fill="#7bc043" />
        <path d="M1.500 1.500h13v13h-13z" stroke="#a6d97c" />
        <path d="M5 5v4.500a3 3 0 0 0 6 0V5" stroke="#fff" strokeWidth="2.200" />
        <path d="M7 2l5 3-5 3z" fill="#fff" />
      </>
    ),
  },
  {
    name: "Settings tool",
    open: true,
    art: (
      <>
        <path d="M0 0h16v16H0z" fill="#0d98ad" />
        <circle cx="8" cy="8" r="2.500" stroke="#fff" strokeWidth="1.300" />
        <path d="M8 4v1.500M8 10.500V12M4 8h1.500M10.500 8H12M5 5l1 1M10 10l1 1M5 11l1-1M10 6l1-1" stroke="#fff" strokeWidth="1.200" />
      </>
    ),
  },
  {
    name: "Editor",
    open: true,
    art: (
      <>
        <path d="M1 2h10c4 0 4 5 0 5H5c-3 0-3 6 1 6h9" stroke="#2e7fd6" strokeWidth="2.400" />
        <path d="M3 5h7M2 10h12" stroke="#9ad0f2" strokeWidth="1.200" />
        <path d="M9 8l5 7" stroke="#1f4fa8" strokeWidth="1.500" />
      </>
    ),
  },
];

const TRAY = [
  { name: "Hidden icons", art: <path d="M1.500 7.500l4-4 4 4" stroke="#fff" strokeWidth="1.100" /> },
  { name: "Network", art: <><path d="M1 2h9v5H1zM3 10h4M1 0v3" stroke="#ddd" strokeWidth="1.100" /><circle cx="8" cy="8" r="3" fill="#d8232a" /><path d="M7 7l2 2M9 7L7 9" stroke="#fff" strokeWidth=".8" /></> },
  { name: "Recorder", art: <><circle cx="5.500" cy="5.500" r="5" fill="#3c3c3c" stroke="#777" strokeWidth=".7" /><circle cx="5.500" cy="5.500" r="3" fill="#e0181c" /></> },
  { name: "Recorder display", art: <><circle cx="5.500" cy="5.500" r="5" fill="#3c3c3c" stroke="#777" strokeWidth=".7" /><circle cx="5.500" cy="5" r="3" fill="#e0181c" /><path d="M6 7h5v3.500H6z" fill="#e8e8e8" /></> },
  { name: "Volume", art: <><path d="M0 4h2l2-2.500v8L2 7H0z" stroke="#fff" strokeWidth=".8" /><path d="M5.500 4c1 1 1 2 0 3M7 2.500c2 2 2 4 0 6M8.500 1c3 3 3 6 0 9" stroke="#fff" strokeWidth=".8" /></> },
  { name: "Notifications", art: <><path d="M0 0h11v8H7l-2 3V8H0z" fill="#fff" /><path d="M2 2.500h7M2 5h5" stroke="#222" strokeWidth=".8" /></> },
];

function Taskbar() {
  return (
    <footer className="flex h-[27px] shrink-0 items-stretch bg-[#03050c] text-white">
      {APPS.map((a) => (
        <button
          key={a.name}
          type="button"
          aria-label={a.name}
          className={clsx(
            "relative flex items-center justify-center",
            a.open ? "w-[33px]" : "w-[32px]",
            a.active && "bg-[#34373b]"
          )}
        >
          <Icon box={16} className={a.open ? "size-[16px]" : "size-[13px]"}>{a.art}</Icon>
          {a.open && (
            <span className={clsx("absolute bottom-0 h-[2px] bg-[#6fc3e4]", a.active ? "inset-x-0" : "inset-x-[3px]")} />
          )}
        </button>
      ))}
      <div className="ml-auto flex items-center gap-[5px]">
        {TRAY.map((t) => (
          <button key={t.name} type="button" aria-label={t.name}>
            <Icon box={11} className="size-[11px]">{t.art}</Icon>
          </button>
        ))}
      </div>
      <div className="flex w-[50px] flex-col justify-center text-center leading-[11px]">
        <div>13:18</div>
        <div>7.07.2018</div>
      </div>
      <span className="mr-[2px] w-px bg-[#4a4d54]" />
    </footer>
  );
}

export default function App() {
  return (
    <div className="flex h-screen w-full flex-col overflow-hidden bg-[#f0f0f0] font-[Roboto,'Segoe_UI',sans-serif] text-[8px] leading-[10px]">
      <TitleBar />
      <TabBar />
      <Ribbon />
      <div className="h-[4px] shrink-0 border-t-2 border-[#9fb6d2] bg-[#c9d8e8]" />
      <div className="flex min-h-0 flex-1 bg-[#c0d2e8] pr-[2px]">
        <WorkAreaPanel />
        <div className="w-[3px] shrink-0" />
        <Drawing />
      </div>
      <div className="h-[22px] shrink-0 bg-[#efefef]" />
      <StatusBar />
      <Taskbar />
    </div>
  );
}
